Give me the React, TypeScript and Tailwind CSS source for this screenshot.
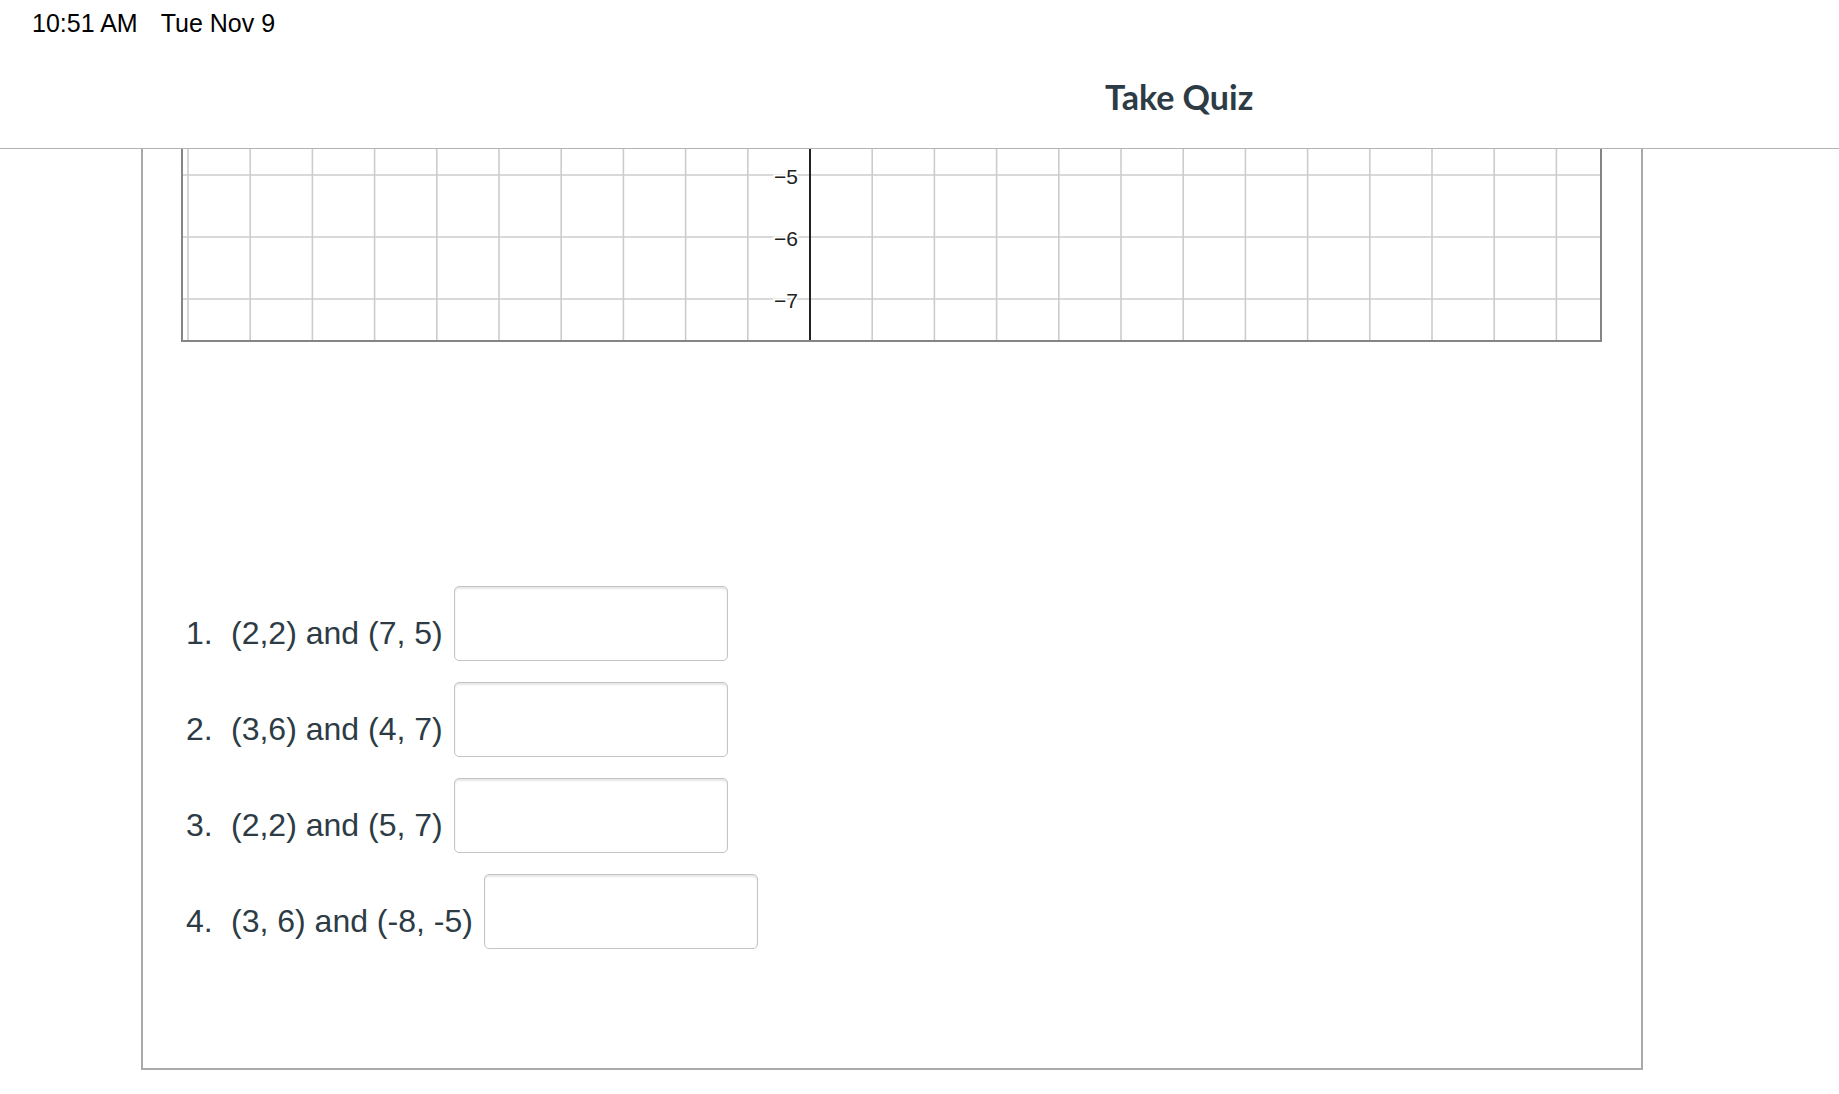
import React from 'react';

const questions = [
  { n: '1.', text: '(2,2) and (7, 5)' },
  { n: '2.', text: '(3,6) and (4, 7)' },
  { n: '3.', text: '(2,2) and (5, 7)' },
  { n: '4.', text: '(3, 6) and (-8, -5)' },
];

// visible slice of the coordinate plane (scrolled so only the bottom rows show)
const GraphSlice = () => {
  const step = 62.2;
  const axisX = 629;
  const vLines = Array.from({ length: 23 }, (_, k) => 7 + step * k).filter(
    (x) => Math.abs(x - axisX) > 2
  );
  const hLines = [
    { y: 26, label: '−5' },
    { y: 88, label: '−6' },
    { y: 150, label: '−7' },
  ];
  return (
    <svg width={1422} height={194} className="block">
      {vLines.map((x) => (
        <line key={x} x1={x} y1={0} x2={x} y2={192} stroke="#cccccc" strokeWidth={1.6} />
      ))}
      {hLines.map((h) => (
        <line key={h.y} x1={1} y1={h.y} x2={1420} y2={h.y} stroke="#cccccc" strokeWidth={1.6} />
      ))}
      <line x1={axisX} y1={0} x2={axisX} y2={192} stroke="#222222" strokeWidth={2} />
      {hLines.map((h) => (
        <text
          key={h.label}
          x={617}
          y={h.y + 9}
          textAnchor="end"
          fontFamily="'Liberation Sans', Arial, sans-serif"
          fontSize={21}
          fill="#222222"
          stroke="#ffffff"
          strokeWidth={4}
          paintOrder="stroke"
        >
          {h.label}
        </text>
      ))}
      <path d="M1 0 V192 H1420 V0" fill="none" stroke="#858585" strokeWidth={2} />
    </svg>
  );
};

export default function App() {
  return (
    <div className="min-h-screen bg-white font-['Liberation_Sans',Arial,sans-serif]">
      {/* Top bar */}
      <div className="h-[149px] border-b border-[#b3b3b3]">
        <div className="flex gap-[23px] pl-[32px] pt-[11px] text-[25px] leading-none text-black">
          <span>10:51 AM</span>
          <span>Tue Nov 9</span>
        </div>
        <h1 className="ml-[1105px] mt-[44px] font-['Lato',sans-serif] text-[34px] font-bold leading-none text-[#2d3b45]">
          Take Quiz
        </h1>
      </div>

      {/* Question card */}
      <div className="ml-[141px] h-[921px] w-[1502px] border-x-2 border-b-2 border-[#a9a9a9]">
        <div className="ml-[38px]">
          <GraphSlice />
        </div>

        <ol className="mt-[243px] flex flex-col gap-[21px] pl-[43px] text-[32px] text-[#2d3b45]">
          {questions.map((q) => (
            <li key={q.n} className="flex items-end">
              <span className="w-[45px] pb-[12px] leading-none">{q.n}</span>
              <span className="pb-[12px] leading-none">{q.text}</span>
              <input
                type="text"
                className="ml-[11px] h-[75px] w-[274px] rounded-[5px] border border-[#bfc5c9] bg-white shadow-[inset_0_2px_2px_rgba(0,0,0,0.1)] outline-none"
              />
            </li>
          ))}
        </ol>
      </div>
    </div>
  );
}
